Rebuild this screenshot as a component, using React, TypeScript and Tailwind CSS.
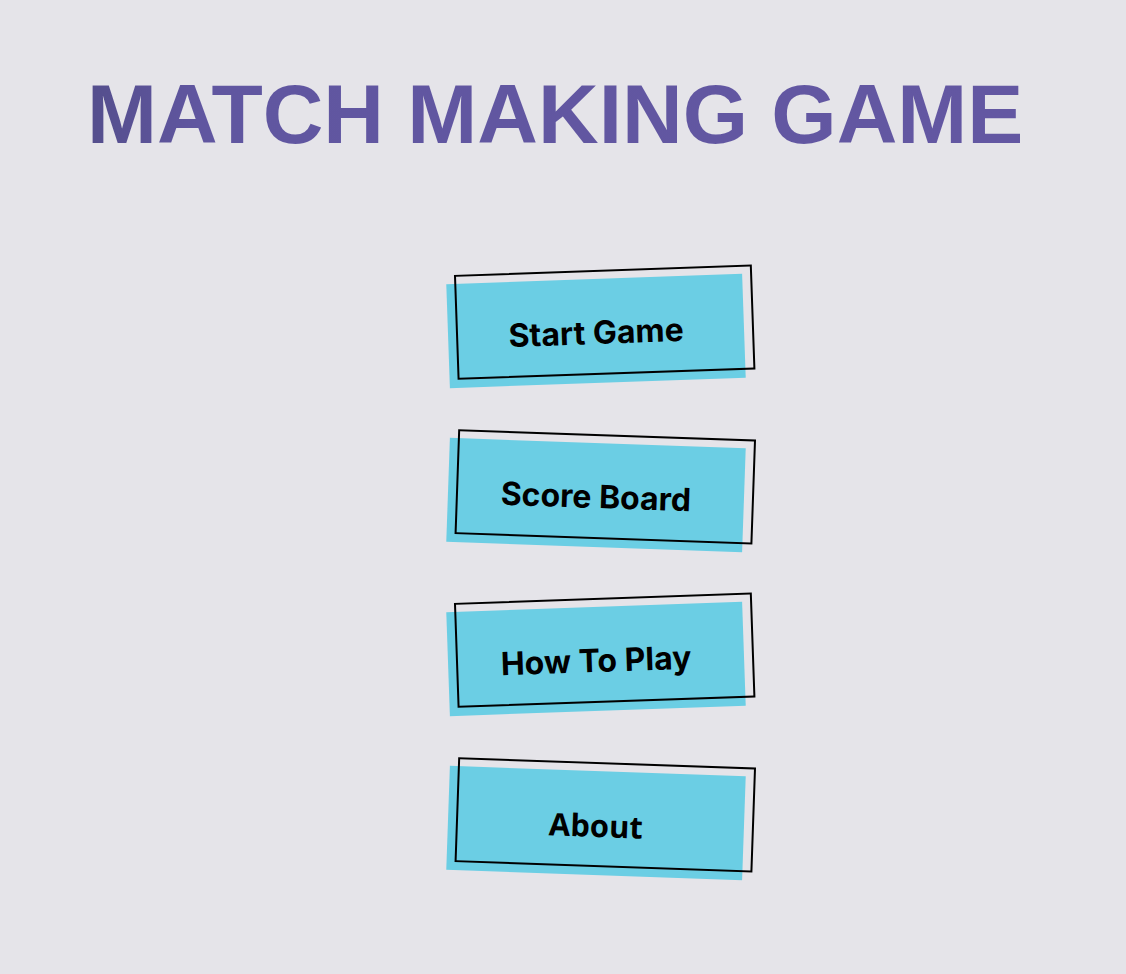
import React from "react";

const buttons = [
  { label: "Start Game", rot: "-rotate-2", font: "font-['Inter',sans-serif] font-bold text-[32px]" },
  { label: "Score Board", rot: "rotate-2", font: "font-['Inter',sans-serif] font-bold text-[32px]" },
  { label: "How To Play", rot: "-rotate-2", font: "font-['Inter',sans-serif] font-bold text-[32px]" },
  { label: "About", rot: "rotate-2", font: "font-['Open_Sans',sans-serif] font-bold text-[31px]" },
];

export default function App() {
  return (
    <div className="min-h-[974px] w-full bg-[#e5e4e9] flex flex-col">
      <div className="pt-[72px] pl-[87px]">
        <h1 className="font-['Liberation_Sans',Arial,sans-serif] font-bold text-[84px] leading-none whitespace-nowrap bg-[linear-gradient(90deg,#544e8c_0%,#6056a0_12%,#6357a2_100%)] bg-clip-text text-transparent inline-block">
          MATCH MAKING GAME
        </h1>
      </div>
      <div className="flex flex-col items-center pl-[66px] pt-[123px] gap-[60px]">
        {buttons.map((b) => (
          <div key={b.label} className={`relative w-[296px] h-[104px] ${b.rot}`}>
            <div className="absolute inset-0 bg-[#6bcee4]" />
            <div className="absolute left-[8px] top-[-9px] w-[298px] h-[105px] border-2 border-black" />
            <div className={`relative flex h-full items-center justify-center pt-[4px] text-black ${b.font}`}>
              {b.label}
            </div>
          </div>
        ))}
      </div>
    </div>
  );
}
